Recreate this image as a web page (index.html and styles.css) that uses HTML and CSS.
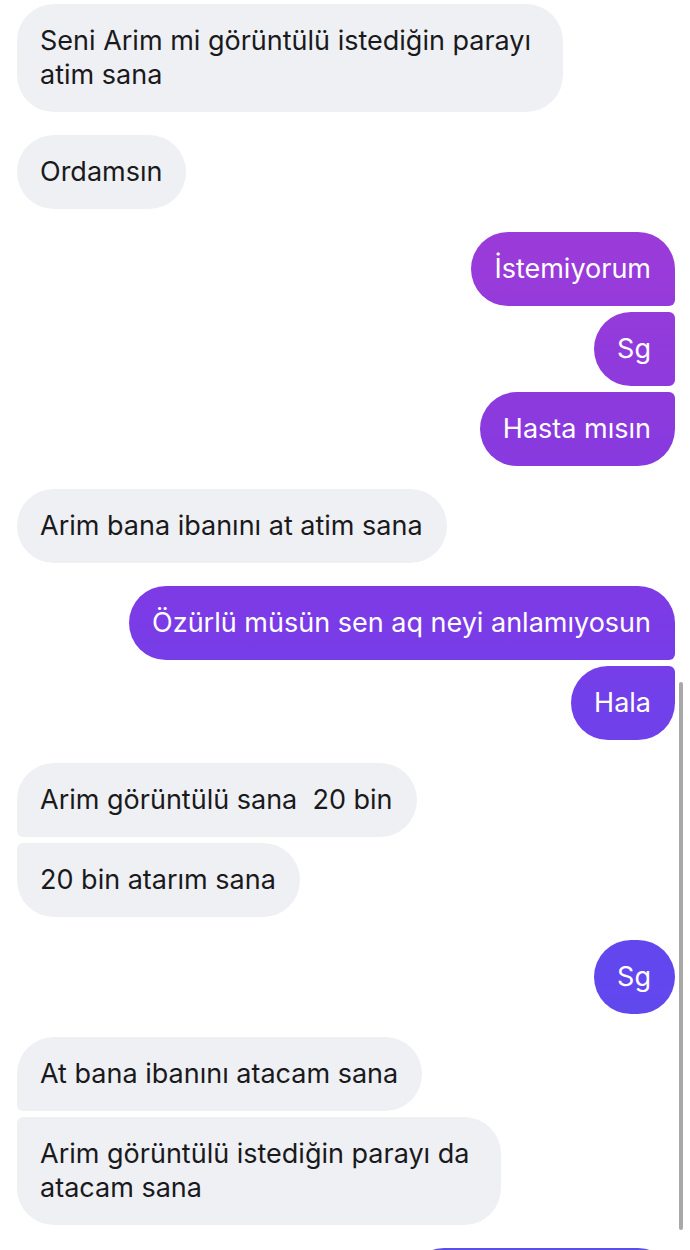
FILE: index.html
```html
<!DOCTYPE html>
<html lang="tr">
<head>
<meta charset="utf-8">
<title>Sohbet</title>
<link rel="stylesheet" href="styles.css">
</head>
<body>
<div class="chat">
  <div class="group received">
    <div class="bubble">Seni Arim mi görüntülü istediğin parayı&nbsp;<br>atim sana</div>
  </div>
  <div class="group received">
    <div class="bubble">Ordamsın</div>
  </div>
  <div class="group sent">
    <div class="bubble">İstemiyorum</div>
    <div class="bubble">Sg</div>
    <div class="bubble">Hasta mısın</div>
  </div>
  <div class="group received">
    <div class="bubble">Arim bana ibanını at atim sana</div>
  </div>
  <div class="group sent">
    <div class="bubble">Özürlü müsün sen aq neyi anlamıyosun</div>
    <div class="bubble">Hala</div>
  </div>
  <div class="group received">
    <div class="bubble">Arim görüntülü sana&nbsp; 20 bin</div>
    <div class="bubble">20 bin atarım sana</div>
  </div>
  <div class="group sent">
    <div class="bubble">Sg</div>
  </div>
  <div class="group received">
    <div class="bubble">At bana ibanını atacam sana</div>
    <div class="bubble">Arim görüntülü istediğin parayı da&nbsp;<br>atacam sana</div>
  </div>
  <div class="group sent">
    <div class="bubble">Gerek yok, sağ ol</div>
  </div>
</div>
<div class="scrollbar"></div>
</body>
</html>
```
FILE: styles.css
```css
html {
  overflow: hidden;
  background: #ffffff;
}
body {
  margin: 0;
  background: #ffffff;
  font-family: "Inter", "Noto Sans", sans-serif;
  font-size: 27px;
  line-height: 34px;
  color: #1a1a1c;
  -webkit-font-smoothing: antialiased;
}
.chat {
  display: flex;
  flex-direction: column;
  gap: 23px;
  padding: 4px 15px 0 17px;
}
.group {
  display: flex;
  flex-direction: column;
  gap: 6px;
}
.group.received {
  align-items: flex-start;
}
.group.sent {
  align-items: flex-end;
}
.bubble {
  padding: 20px 24px 20px 23px;
  border-radius: 37px;
  white-space: nowrap;
}
.received .bubble {
  background: #eff0f4;
}
.sent .bubble {
  color: #ffffff;
  background: linear-gradient(to bottom,
    #a63bd3 0px,
    #9a3bd9 250px,
    #8a3ade 430px,
    #7b3be6 620px,
    #7140ea 700px,
    #6247ee 975px,
    #5a4fe6 1250px) fixed;
}
.received .bubble:not(:last-child) {
  border-bottom-left-radius: 6px;
}
.received .bubble:not(:first-child) {
  border-top-left-radius: 6px;
}
.sent .bubble:not(:last-child) {
  border-bottom-right-radius: 6px;
}
.sent .bubble:not(:first-child) {
  border-top-right-radius: 6px;
}
.scrollbar {
  position: absolute;
  left: 679px;
  top: 682px;
  width: 4px;
  height: 548px;
  border-radius: 2px;
  background: #a8a8a8;
}
```
